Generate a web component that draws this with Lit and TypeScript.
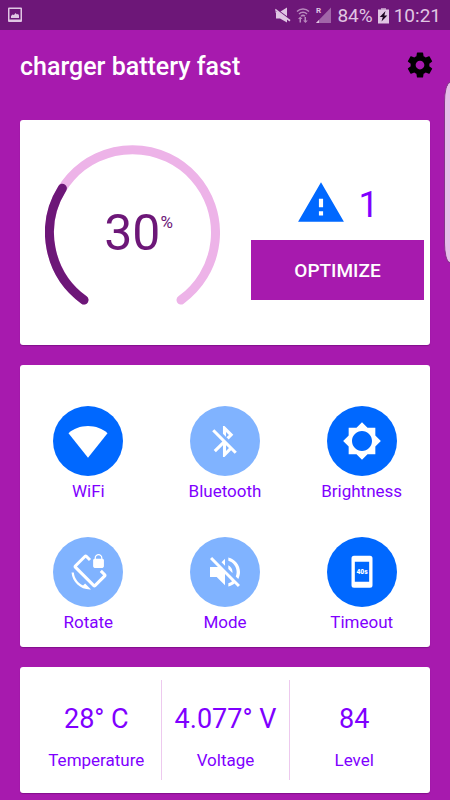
import { LitElement, html, svg, css } from "lit";
import { customElement, property } from "lit/decorators.js";

interface Toggle {
  label: string;
  on: boolean;
  size: "small" | "large";
  icon: unknown;
}

const TOGGLES: Toggle[] = [
  {
    label: "WiFi",
    on: true,
    size: "large",
    icon: svg`<path d="M.3 7.3C3.2 4.7 7.500 3 12 3s8.800 1.700 11.700 4.300L12 22z" />`,
  },
  {
    label: "Bluetooth",
    on: false,
    size: "small",
    icon: svg`<path d="M13 5.830l1.880 1.880-1.600 1.600 1.410 1.410 3.020-3.020L12 2h-1v5.030l2 2v-3.200zM5.410 4L4 5.410 10.590 12 5 17.590 6.410 19 11 14.410V22h1l4.290-4.290 2.300 2.290L20 18.590 5.410 4zM13 18.170v-3.760l1.880 1.880L13 18.170z" />`,
  },
  {
    label: "Brightness",
    on: true,
    size: "large",
    icon: svg`<path fill-rule="evenodd" d="M20 15.310L23.310 12 20 8.690V4h-4.690L12 .69 8.690 4H4v4.690L.69 12 4 15.310V20h4.690L12 23.310 15.310 20H20v-4.690zM12 18c-3.310 0-6-2.690-6-6s2.690-6 6-6 6 2.690 6 6-2.690 6-6 6z" />`,
  },
  {
    label: "Rotate",
    on: false,
    size: "small",
    icon: svg`<path d="M23.250 12.770l-2.570-2.570-1.410 1.410 2.220 2.220-5.660 5.660L4.510 8.170l5.660-5.660 2.100 2.100 1.410-1.410L11.230.75c-.59-.59-1.540-.59-2.120 0L2.750 7.110c-.59.59-.59 1.540 0 2.120l12.020 12.020c.59.59 1.540.59 2.120 0l6.360-6.360c.59-.59.59-1.540 0-2.120zM8.470 20.480C5.200 18.940 2.860 15.760 2.500 12H1c.51 6.160 5.660 11 11.950 11l.66-.03-3.810-3.820-1.330 1.330zM16 9h5c.55 0 1-.45 1-1V4c0-.55-.45-1-1-1v-.5C21 1.120 19.880 0 18.500 0S16 1.120 16 2.500V3c-.55 0-1 .45-1 1v4c0 .55.45 1 1 1zm.8-6.500c0-.94.76-1.700 1.700-1.700s1.700.76 1.700 1.700V3h-3.400v-.5z" />`,
  },
  {
    label: "Mode",
    on: false,
    size: "large",
    icon: svg`<path d="M16.500 12c0-1.770-1.020-3.290-2.500-4.030v2.210l2.450 2.450c.03-.2.050-.41.050-.63zm2.500 0c0 .94-.2 1.820-.54 2.640l1.510 1.510C20.630 14.910 21 13.500 21 12c0-4.280-2.990-7.860-7-8.770v2.060c2.890.86 5 3.540 5 6.710zM4.270 3L3 4.270 7.730 9H3v6h4l5 5v-6.730l4.250 4.250c-.67.52-1.420.93-2.250 1.180v2.060c1.380-.31 2.630-.95 3.690-1.810L19.730 21 21 19.730l-9-9L4.270 3zM12 4L9.910 6.090 12 8.180V4z" />`,
  },
  {
    label: "Timeout",
    on: true,
    size: "large",
    icon: svg`<path fill-rule="evenodd" d="M7.200 2.300h9.600a1.500 1.500 0 0 1 1.500 1.500v16.200a1.500 1.500 0 0 1-1.500 1.500H7.200A1.500 1.500 0 0 1 5.700 20V3.800a1.500 1.500 0 0 1 1.500-1.500zM7.700 5.800v12h8.600v-12z" /><text class="seconds" x="12" y="13" text-anchor="middle">40s</text>`,
  },
];

const STATS = [
  { value: "28° C", label: "Temperature" },
  { value: "4.077° V", label: "Voltage" },
  { value: "84", label: "Level" },
];

@customElement("status-bar")
class StatusBar extends LitElement {
  static styles = css`
    :host {
      display: flex;
      align-items: center;
      height: 30px;
      padding: 0 9px 0 8px;
      background: #6d1778;
      color: #e0c6e3;
      font-size: 19px;
      line-height: 30px;
    }
    svg {
      display: block;
      flex: none;
      fill: currentColor;
    }
    .system {
      display: flex;
      align-items: center;
      gap: 5px;
      margin-left: auto;
    }
    .system span {
      padding-top: 2px;
    }
    .radio {
      display: flex;
      align-items: center;
      gap: 3px;
    }
    .bolt {
      fill: #1c0620;
    }
    .tag {
      font: 700 8px Roboto, sans-serif;
    }
    .line {
      fill: none;
      stroke: currentColor;
      stroke-width: 1.5;
    }
    .dim {
      opacity: 0.45;
    }
    .mid {
      opacity: 0.65;
    }
  `;

  render() {
    return html`
      <svg width="14" height="16" viewBox="0 0 14 16">
        <path fill-rule="evenodd" d="M1 .5h12a1 1 0 0 1 1 1v12.500a1 1 0 0 1-1 1H1a1 1 0 0 1-1-1V1.500a1 1 0 0 1 1-1zM1.500 2v10.500h11V2z" />
        <path d="M3 11V9l1.500-1.500L6 8l1.500-2L9 7.500l1-.8 1 1.800V11z" />
      </svg>
      <div class="system">
        <div class="radio">
          <svg width="16" height="16" viewBox="0 0 16 16">
            <path d="M5.500 4.500L12 .5v8.800zM0 4.500h2.500L12 11.500V15.500L5 11.500H1V6z" />
            <path d="M.6 1.800L15.500 13l-1 1.400L0 3.200z" />
          </svg>
          <svg class="mid" width="18" height="18" viewBox="0 0 18 18">
            <path class="line" d="M3 5.500a8.500 8.500 0 0 1 12 0M5 8a5.700 5.700 0 0 1 8 0M7 10.300a3 3 0 0 1 4 0" />
            <path d="M5.500 16.500v-3.500H4l2.300-2.500L8.500 13H7v3.500zM10.500 11v3.500H9l2.500 2.500 2.300-2.500H12V11z" />
          </svg>
          <svg width="17" height="18" viewBox="0 0 17 18">
            <path class="dim" d="M16 1.500v15.500H1z" />
            <path d="M4 14v3H1z" />
            <text class="tag" x="1" y="7">R</text>
          </svg>
        </div>
        <span>84%</span>
        <svg width="11" height="17" viewBox="0 0 11 17">
          <path class="mid" d="M3 1h5v2H3z" />
          <path d="M0 2.500h11V16.500H0z" />
          <path class="bolt" d="M7.500 4L1.800 10h3L3.500 14.500 9.300 8.500h-3z" />
        </svg>
        <span>10:21</span>
      </div>
    `;
  }
}

@customElement("battery-gauge")
class BatteryGauge extends LitElement {
  @property({ type: Number }) value = 0;

  static styles = css`
    :host {
      display: grid;
      justify-items: center;
      color: #6d1778;
    }
    svg,
    .reading {
      grid-area: 1 / 1;
    }
    svg {
      display: block;
    }
    .track,
    .fill {
      fill: none;
      stroke-width: 9;
      stroke-linecap: round;
    }
    .track {
      stroke: #edb3e8;
    }
    .fill {
      stroke: #6d1778;
    }
    .reading {
      display: flex;
      align-self: center;
      align-items: flex-start;
      padding-left: 12px;
      font-size: 50px;
      line-height: 60px;
    }
    .unit {
      font-size: 17px;
      line-height: 38px;
    }
  `;

  render() {
    const arc = "M39 155A83 83 0 1 1 136 155";
    return html`
      <svg width="175" height="175" viewBox="0 0 175 175" aria-hidden="true">
        <path class="track" d=${arc} />
        <path class="fill" d=${arc} pathLength="100" stroke-dasharray="${this.value} 200" />
      </svg>
      <div class="reading">${this.value}<span class="unit">%</span></div>
    `;
  }
}

@customElement("app-root")
class AppRoot extends LitElement {
  static styles = css`
    :host {
      display: block;
      position: relative;
      min-height: 100vh;
      box-sizing: border-box;
      background: #a71aae;
      color: #7f00ff;
      font-family: Roboto, "Liberation Sans", sans-serif;
    }
    button {
      border: 0;
      padding: 0;
      background: none;
      color: inherit;
      font: inherit;
      cursor: pointer;
    }
    svg {
      display: block;
      fill: currentColor;
    }
    .bar {
      display: flex;
      align-items: center;
      justify-content: space-between;
      height: 70px;
      padding: 0 15px 0 20px;
    }
    .title {
      margin: 0;
      padding-top: 4px;
      color: #fff;
      font-size: 25px;
      font-weight: 500;
      line-height: 32px;
    }
    .settings {
      color: #000;
    }
    .cards {
      display: flex;
      flex-direction: column;
      gap: 20px;
      padding: 20px 20px 7px;
    }
    .card {
      border-radius: 3px;
      background: #fff;
      box-shadow: 0 1px 1px rgba(80, 0, 90, 0.4);
    }
    .summary {
      display: grid;
      grid-template-columns: 225fr 185fr;
      align-items: start;
      padding: 25px 0;
    }
    .action {
      display: flex;
      flex-direction: column;
      gap: 12px;
      padding: 33px 6px 0;
    }
    .alerts {
      display: flex;
      align-items: center;
      justify-content: center;
      gap: 12px;
      height: 50px;
      font-size: 36px;
      line-height: 50px;
    }
    .count {
      padding-top: 4px;
    }
    .warning {
      color: #0068ff;
    }
    .optimize {
      height: 60px;
      background: #a71aae;
      color: #fff;
      font-size: 19px;
      font-weight: 500;
    }
    .toggles {
      display: grid;
      grid-template-columns: repeat(3, 1fr);
      row-gap: 31px;
      padding: 41px 0 10px;
    }
    .toggle {
      display: flex;
      flex-direction: column;
      align-items: center;
      font-size: 17px;
      line-height: 30px;
    }
    .disc {
      display: grid;
      place-items: center;
      width: 70px;
      height: 70px;
      border-radius: 50%;
      background: #80b3ff;
      color: #fff;
    }
    .on {
      background: #0068ff;
    }
    .small {
      width: 37px;
      height: 37px;
    }
    .large {
      width: 40px;
      height: 40px;
    }
    .seconds {
      font: 900 4px Roboto, sans-serif;
    }
    .stats {
      display: grid;
      grid-template-columns: repeat(3, 1fr);
      margin: 0;
      padding: 13px 12px;
    }
    .stat {
      display: flex;
      flex-direction: column-reverse;
      justify-content: flex-start;
      gap: 8px;
      padding: 20px 0 5px;
      height: 75px;
      text-align: center;
    }
    .stat + .stat {
      border-left: 1px solid #edc9ee;
    }
    .name {
      font-size: 17px;
      line-height: 30px;
    }
    .value {
      margin: 0;
      font-size: 27px;
      line-height: 36px;
      white-space: nowrap;
    }
    .edge {
      position: absolute;
      top: 82px;
      right: 0;
      width: 6px;
      height: 181px;
      box-sizing: border-box;
      border: 1px solid #85348b;
      border-right: 0;
      border-radius: 6px 0 0 6px / 20px 0 0 20px;
      background: #e5bde8;
    }
  `;

  render() {
    return html`
      <status-bar></status-bar>
      <header class="bar">
        <h1 class="title">charger battery fast</h1>
        <button class="settings" aria-label="Settings">
          <svg width="30" height="30" viewBox="0 0 24 24">
            <path d="M19.430 12.980c.04-.32.070-.64.070-.98s-.03-.66-.07-.98l2.110-1.650c.19-.15.240-.42.120-.64l-2-3.460c-.12-.22-.39-.3-.61-.22l-2.490 1c-.52-.4-1.080-.73-1.690-.98l-.38-2.650C14.460 2.180 14.250 2 14 2h-4c-.25 0-.46.18-.49.42l-.38 2.650c-.61.25-1.170.59-1.690.98l-2.490-1c-.23-.09-.49 0-.61.22l-2 3.460c-.13.22-.07.49.12.64l2.110 1.650c-.04.32-.07.65-.07.98s.03.66.07.98l-2.110 1.650c-.19.15-.24.42-.12.64l2 3.460c.12.22.39.3.61.22l2.490-1c.52.4 1.080.73 1.690.98l.38 2.650c.03.24.24.42.49.42h4c.25 0 .46-.18.49-.42l.38-2.650c.61-.25 1.170-.59 1.690-.98l2.490 1c.23.09.49 0 .61-.22l2-3.460c.12-.22.07-.49-.12-.64l-2.110-1.650zM12 15.500c-1.930 0-3.500-1.570-3.500-3.500s1.570-3.500 3.500-3.500 3.500 1.570 3.500 3.500-1.570 3.500-3.500 3.500z" />
          </svg>
        </button>
      </header>
      <main class="cards">
        <section class="card summary">
          <battery-gauge value="30"></battery-gauge>
          <div class="action">
            <div class="alerts">
              <svg class="warning" width="50" height="50" viewBox="0 0 24 24">
                <path d="M1 21h22L12 2 1 21zm12-3h-2v-2h2v2zm0-4h-2v-4h2v4z" />
              </svg>
              <span class="count">1</span>
            </div>
            <button class="optimize">OPTIMIZE</button>
          </div>
        </section>
        <section class="card toggles">
          ${TOGGLES.map(
            (t) => html`
              <button class="toggle" aria-pressed=${t.on ? "true" : "false"}>
                <span class="disc ${t.on ? "on" : ""}">
                  <svg class=${t.size} viewBox="0 0 24 24">${t.icon}</svg>
                </span>
                ${t.label}
              </button>
            `
          )}
        </section>
        <dl class="card stats">
          ${STATS.map(
            (s) => html`
              <div class="stat">
                <dt class="name">${s.label}</dt>
                <dd class="value">${s.value}</dd>
              </div>
            `
          )}
        </dl>
      </main>
      <div class="edge"></div>
    `;
  }
}
